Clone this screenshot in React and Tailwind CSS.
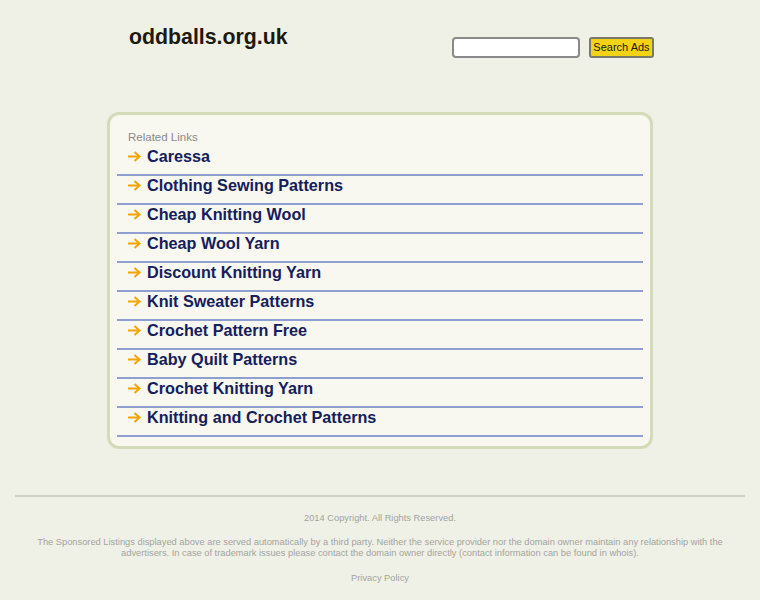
import React from "react";

const links = [
  "Caressa",
  "Clothing Sewing Patterns",
  "Cheap Knitting Wool",
  "Cheap Wool Yarn",
  "Discount Knitting Yarn",
  "Knit Sweater Patterns",
  "Crochet Pattern Free",
  "Baby Quilt Patterns",
  "Crochet Knitting Yarn",
  "Knitting and Crochet Patterns",
];

function Arrow() {
  return (
    <svg width="14" height="11" viewBox="0 0 14 11" className="shrink-0">
      <path d="M1 5.5H12" stroke="#f4a300" strokeWidth="2" fill="none" />
      <path d="M7.5 1L12.5 5.5L7.5 10" stroke="#f4a300" strokeWidth="2" fill="none" />
    </svg>
  );
}

export default function App() {
  return (
    <div className="min-h-[600px] bg-[#f0f1e6] font-['Liberation_Sans',Arial,sans-serif]">
      <div className="w-[546px] mx-auto">
        <div className="h-[112px] flex justify-between items-start">
          <div className="ml-[22px] mt-[24px] text-[21.3px] leading-[26px] font-bold text-[#1c1910]">
            oddballs.org.uk
          </div>
          <div className="flex mt-[37px] gap-[9px] -mr-[1px]">
            <input
              type="text"
              className="w-[128px] h-[21px] border-2 border-[#8a8a8a] rounded-[4px] bg-white outline-none"
            />
            <button className="w-[65px] h-[21px] border-2 border-[#7a7a6a] rounded-[3px] bg-[#f2d414] text-[11px] leading-[17px] text-[#1a1a10] font-['Liberation_Sans',Arial,sans-serif] px-0">
              Search Ads
            </button>
          </div>
        </div>
        <div className="border-[3px] border-[#d3dbb8] rounded-[12px] bg-[#f8f7f0] px-[7px] pt-[12px] pb-[9px]">
          <div className="pl-[11px] text-[11.5px] leading-[20px] text-[#8a8a8a]">Related Links</div>
          {links.map((l) => (
            <div key={l} className="h-[29px] border-b-2 border-[#8f9fd0]">
              <div className="flex items-center pl-[10px] gap-[6px] h-[19px]">
                <Arrow />
                <span className="text-[16.2px] font-bold text-[#13205b] leading-[19px]">{l}</span>
              </div>
            </div>
          ))}
        </div>
      </div>
      <div className="mx-[15px] mt-[46px] h-[2px] bg-[#cfd0c6]" />
      <div className="text-center text-[9.3px] text-[#a3a3a0] pb-[10px]">
        <div className="mt-[16px] leading-[11px]">2014 Copyright. All Rights Reserved.</div>
        <div className="mt-[13px] leading-[11px]">
          The Sponsored Listings displayed above are served automatically by a third party. Neither the service provider nor the domain owner maintain any relationship with the
          <br />
          advertisers. In case of trademark issues please contact the domain owner directly (contact information can be found in whois).
        </div>
        <div className="mt-[14px] leading-[11px]">Privacy Policy</div>
      </div>
    </div>
  );
}
